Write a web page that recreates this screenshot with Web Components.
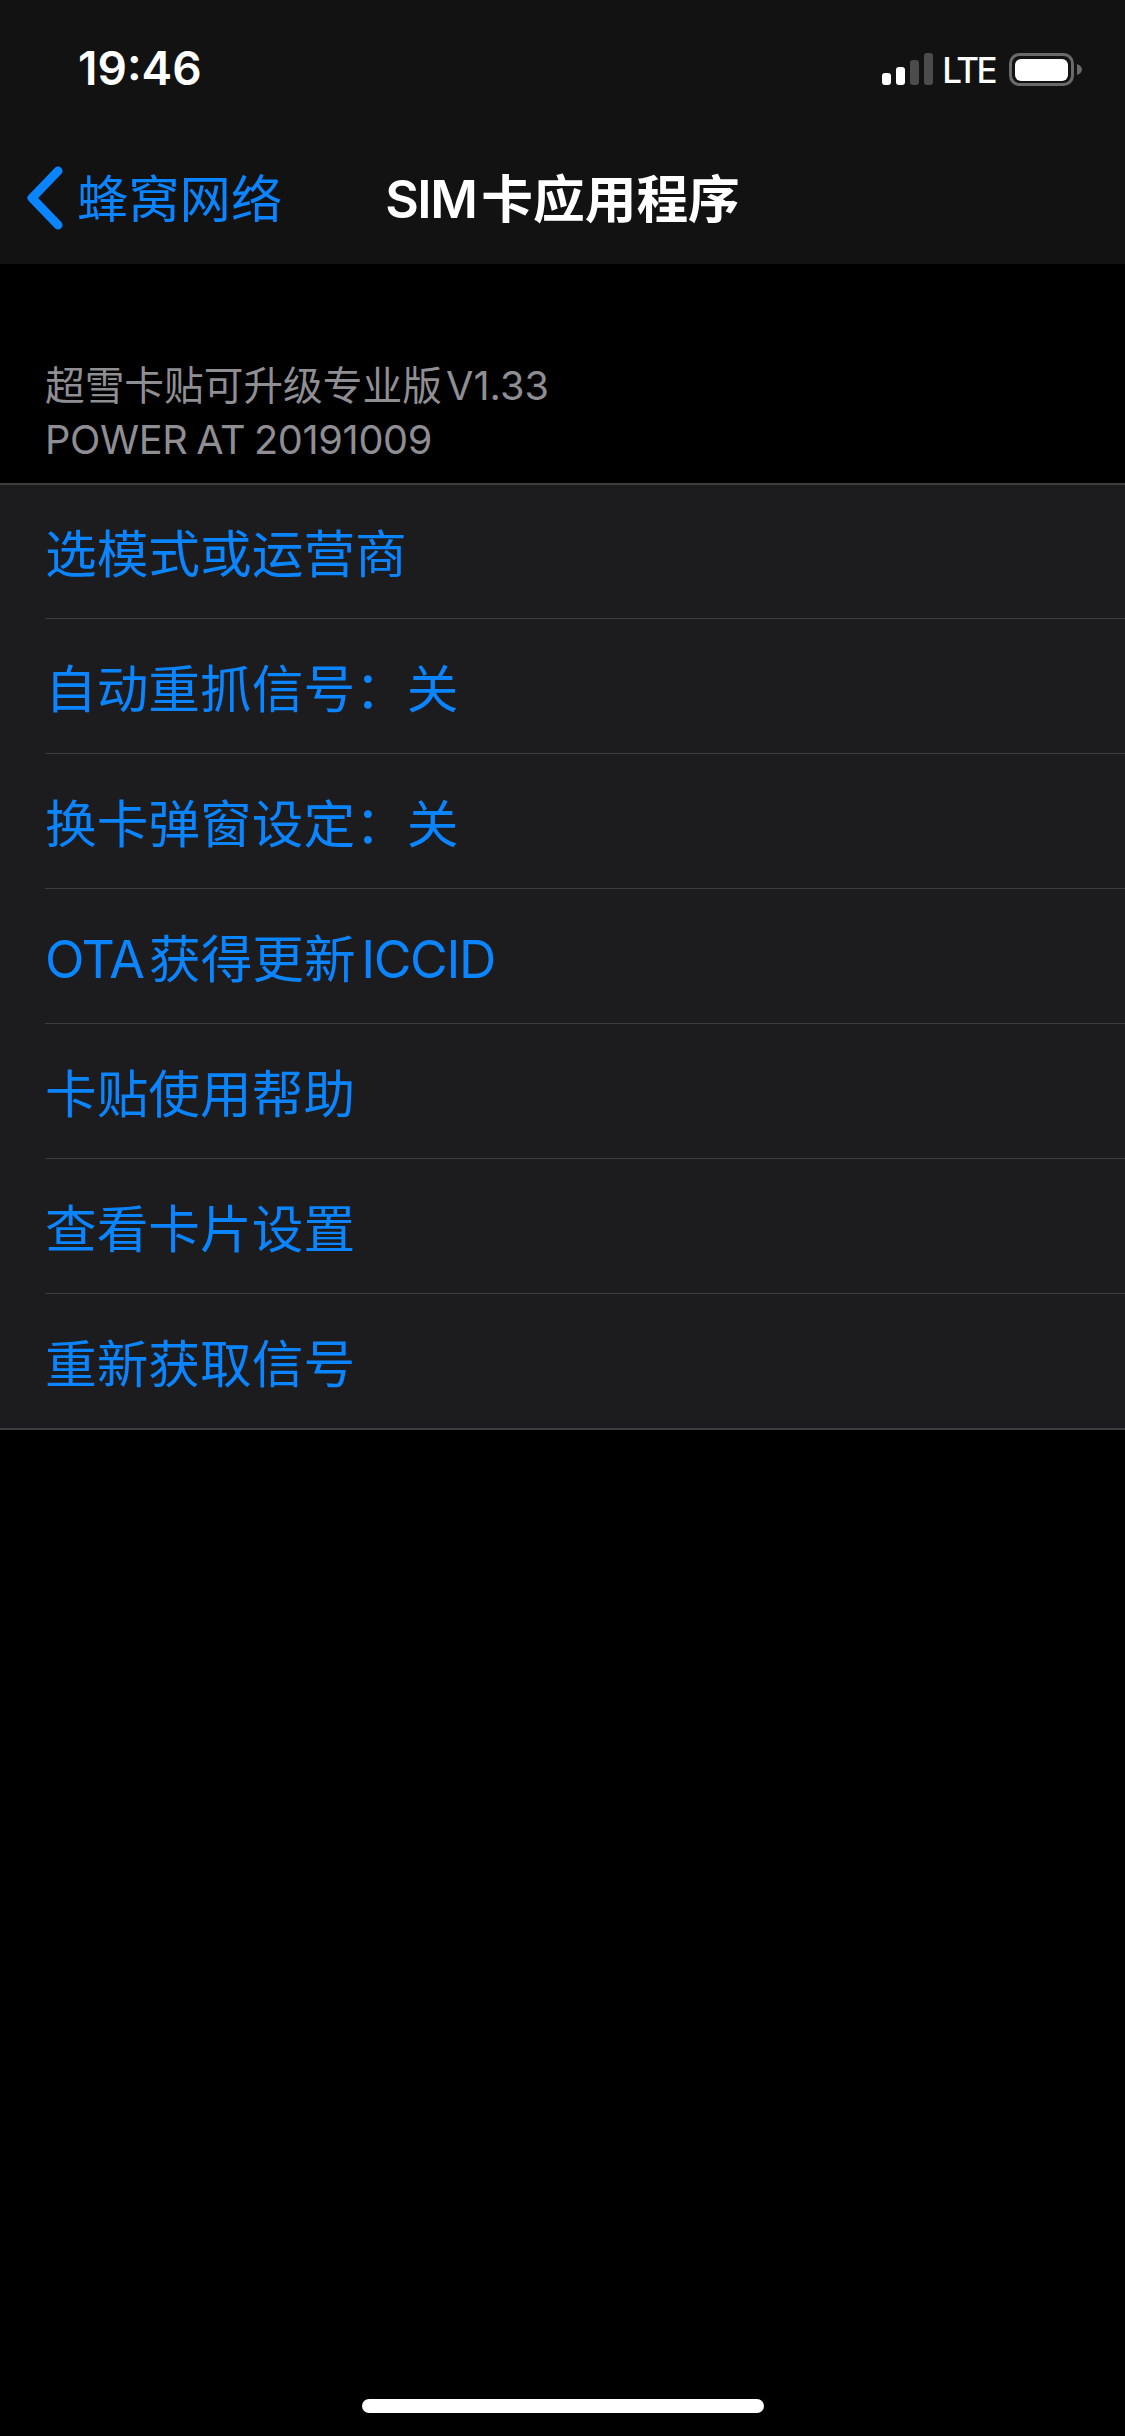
<!DOCTYPE html>
<html lang="zh">
<head>
<meta charset="utf-8">
<title>SIM 卡应用程序</title>
<style>
  html, body { margin: 0; padding: 0; background: #000000; }
  body {
    font-family: Inter, 'Noto Sans CJK SC', sans-serif;
    height: 2436px;
    overflow: hidden;
    width: 1125px;
  }
  .latin { letter-spacing: -1.4px; }
  .tight { word-spacing: -9px; }
  .version { word-spacing: -7px; }
  .serial { letter-spacing: -0.35px; word-spacing: -2px; }
</style>
</head>
<body>
<sim-page>
  <sim-status-bar slot="top" time="19:46"></sim-status-bar>
  <sim-nav-bar slot="top" back="蜂窝网络" label="卡应用程序"></sim-nav-bar>
  <sim-section-header>
    <div class="version">超雪卡贴可升级专业版 V1.33</div>
    <div class="serial">POWER AT 20191009</div>
  </sim-section-header>
  <sim-list>
    <sim-list-item first>选模式或运营商</sim-list-item>
    <sim-list-item>自动重抓信号：关</sim-list-item>
    <sim-list-item>换卡弹窗设定：关</sim-list-item>
    <sim-list-item class="tight"><span class="latin">OTA</span> 获得更新 <span class="latin">ICCID</span></sim-list-item>
    <sim-list-item>卡贴使用帮助</sim-list-item>
    <sim-list-item>查看卡片设置</sim-list-item>
    <sim-list-item last>重新获取信号</sim-list-item>
  </sim-list>
</sim-page>

<script>
class SimPage extends HTMLElement {
  constructor() {
    super();
    this.attachShadow( {mode: 'open'} );
    this.shadowRoot.innerHTML = /* template */ `
      <style>
        :host {
          box-sizing: border-box;
          display: flex;
          flex-direction: column;
          height: 2436px;
          width: 1125px;
        }
        header {
          background-color: #121212;
          display: flex;
          flex-direction: column;
          height: 264px;
        }
        main {
          flex-grow: 1;
        }
        footer {
          display: flex;
          justify-content: center;
          padding: 0 0 23px 0;
        }
        footer div {
          background-color: #ffffff;
          border-radius: 7px;
          height: 14px;
          width: 402px;
        }
      </style>
      <header><slot name="top"></slot></header>
      <main><slot></slot></main>
      <footer><div></div></footer>
    `;
  }
}

class SimStatusBar extends HTMLElement {
  constructor() {
    super();
    this.attachShadow( {mode: 'open'} );
    this.shadowRoot.innerHTML = /* template */ `
      <style>
        :host {
          align-items: center;
          box-sizing: border-box;
          display: flex;
          height: 132px;
          justify-content: space-between;
          padding: 6px 43px 0 78px;
        }
        .time {
          color: #ffffff;
          font-size: 46px;
          font-weight: 600;
          padding-bottom: 3px;
        }
        .right {
          align-items: center;
          display: flex;
          gap: 12px;
        }
        .lte {
          color: #ffffff;
          font-size: 35px;
          font-weight: 500;
          letter-spacing: -2.6px;
          margin-left: -3px;
          padding-right: 2px;
          padding-top: 1px;
        }
        svg { display: block; }
      </style>
      <span class="time"></span>
      <div class="right">
        <svg width="51" height="32" viewBox="0 0 51 32">
          <rect x="0" y="20" width="9" height="12" rx="3" fill="#ffffff"/>
          <rect x="14" y="14" width="9" height="18" rx="3" fill="#ffffff"/>
          <rect x="28" y="7" width="9" height="25" rx="3" fill="#4c4c4c"/>
          <rect x="42" y="0" width="9" height="32" rx="3" fill="#4c4c4c"/>
        </svg>
        <span class="lte">LTE</span>
        <svg width="73" height="33" viewBox="0 0 73 33">
          <rect x="1.5" y="1.5" width="62" height="30" rx="9" fill="none" stroke="#6a6a6a" stroke-width="3"/>
          <rect x="6" y="6" width="53" height="22" rx="6" fill="#ffffff"/>
          <path d="M68 11 C71 12 73 14 73 16.5 C73 19 71 21 68 22 Z" fill="#6a6a6a"/>
        </svg>
      </div>
    `;
    this.$time = this.shadowRoot.querySelector( '.time' );
  }

  connectedCallback() {
    this.$time.textContent = this.getAttribute( 'time' );
  }
}

class SimNavBar extends HTMLElement {
  constructor() {
    super();
    this.attachShadow( {mode: 'open'} );
    this.shadowRoot.innerHTML = /* template */ `
      <style>
        :host {
          align-items: center;
          box-sizing: border-box;
          display: grid;
          flex-grow: 1;
          grid-template-columns: 1fr auto 1fr;
          height: 132px;
        }
        .back {
          align-items: center;
          color: #0a84ff;
          display: flex;
          font-size: 51.3px;
          gap: 13px;
          padding-left: 26px;
        }
        .text {
          padding-bottom: 6px;
        }
        .label {
          color: #ffffff;
          font-size: 51.7px;
          font-weight: 600;
          padding-bottom: 6px;
          white-space: nowrap;
          word-spacing: -8px;
        }
        .sim {
          letter-spacing: -1.5px;
        }
        svg { display: block; }
      </style>
      <div class="back">
        <svg width="38" height="64" viewBox="0 0 38 64">
          <path d="M32 5 L6 32 L32 59" fill="none" stroke="#0a84ff" stroke-width="9" stroke-linecap="round" stroke-linejoin="round"/>
        </svg>
        <span class="text"></span>
      </div>
      <div class="label"><span class="sim">SIM</span> <span class="title"></span></div>
      <div></div>
    `;
    this.$text = this.shadowRoot.querySelector( '.text' );
    this.$title = this.shadowRoot.querySelector( '.title' );
  }

  connectedCallback() {
    this.$text.textContent = this.getAttribute( 'back' );
    this.$title.textContent = this.getAttribute( 'label' );
  }
}

class SimSectionHeader extends HTMLElement {
  constructor() {
    super();
    this.attachShadow( {mode: 'open'} );
    this.shadowRoot.innerHTML = /* template */ `
      <style>
        :host {
          box-sizing: border-box;
          color: #8e8e93;
          display: block;
          font-size: 39.7px;
          height: 219px;
          line-height: 54px;
          padding: 95px 0 0 45px;
        }
      </style>
      <slot></slot>
    `;
  }
}

class SimList extends HTMLElement {
  constructor() {
    super();
    this.attachShadow( {mode: 'open'} );
    this.shadowRoot.innerHTML = /* template */ `
      <style>
        :host {
          background-color: #1c1c1e;
          border-bottom: solid 2px #3d3d40;
          border-top: solid 2px #3d3d40;
          box-sizing: border-box;
          display: block;
          padding-left: 45px;
        }
      </style>
      <slot></slot>
    `;
  }
}

class SimListItem extends HTMLElement {
  constructor() {
    super();
    this.attachShadow( {mode: 'open'} );
    this.shadowRoot.innerHTML = /* template */ `
      <style>
        :host {
          align-items: center;
          border-bottom: solid 1px #3d3d40;
          box-sizing: border-box;
          color: #0a84ff;
          display: flex;
          font-size: 51.7px;
          height: 135px;
          padding-bottom: 2px;
        }
        :host( [first] ) {
          height: 134px;
        }
        :host( [last] ) {
          border-bottom: none;
          height: 134px;
        }
      </style>
      <span><slot></slot></span>
    `;
  }
}

window.customElements.define( 'sim-page', SimPage );
window.customElements.define( 'sim-status-bar', SimStatusBar );
window.customElements.define( 'sim-nav-bar', SimNavBar );
window.customElements.define( 'sim-section-header', SimSectionHeader );
window.customElements.define( 'sim-list', SimList );
window.customElements.define( 'sim-list-item', SimListItem );
</script>
</body>
</html>
